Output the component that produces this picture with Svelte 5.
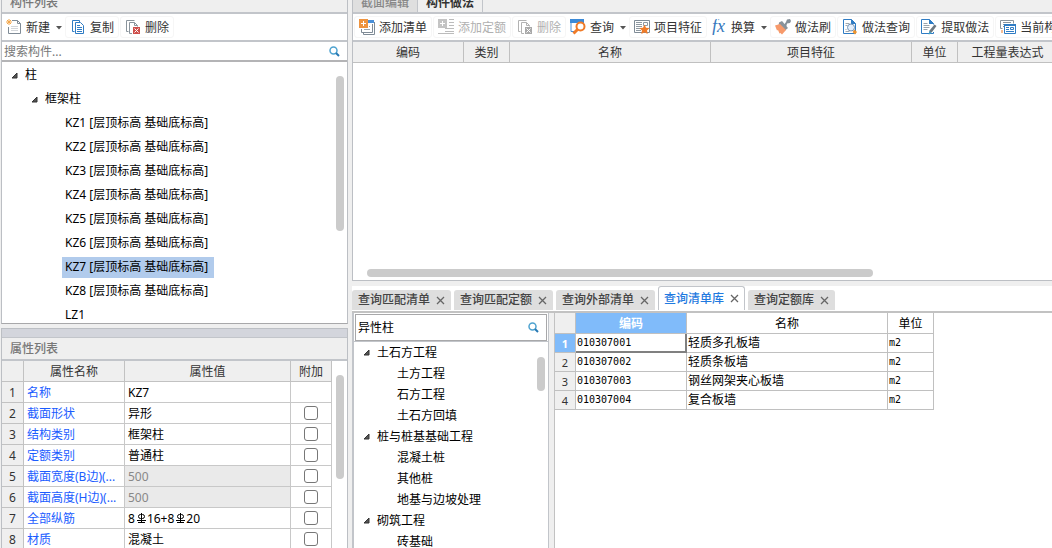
<script lang="ts">
  type Tool = { icon: string; label: string; menu?: boolean; disabled?: boolean };

  const listTools: Tool[] = [
    { icon: 'new', label: '新建', menu: true },
    { icon: 'copy', label: '复制' },
    { icon: 'delete', label: '删除' }
  ];

  const methodTools: Tool[] = [
    { icon: 'addList', label: '添加清单' },
    { icon: 'addQuota', label: '添加定额', disabled: true },
    { icon: 'deleteGray', label: '删除', disabled: true },
    { icon: 'query', label: '查询', menu: true },
    { icon: 'feature', label: '项目特征' },
    { icon: 'fx', label: '换算', menu: true },
    { icon: 'brush', label: '做法刷' },
    { icon: 'queryDoc', label: '做法查询' },
    { icon: 'extract', label: '提取做法' },
    { icon: 'current', label: '当前构件自动套做法' }
  ];

  const columns = ['KZ1', 'KZ2', 'KZ3', 'KZ4', 'KZ5', 'KZ6', 'KZ7', 'KZ8'];
  let selected = $state('KZ7');

  const props = [
    { name: '名称', value: 'KZ7', noCheck: true },
    { name: '截面形状', value: '异形' },
    { name: '结构类别', value: '框架柱' },
    { name: '定额类别', value: '普通柱' },
    { name: '截面宽度(B边)(...', value: '500', readonly: true },
    { name: '截面高度(H边)(...', value: '500', readonly: true },
    { name: '全部纵筋', value: '', rebar: [['8', '16+8'], ['', '20']] },
    { name: '材质', value: '混凝土' }
  ];

  const methodCols = ['编码', '类别', '名称', '项目特征', '单位', '工程量表达式'];

  const queryTabs = ['查询匹配清单', '查询匹配定额', '查询外部清单', '查询清单库', '查询定额库'];
  let activeTab = $state('查询清单库');

  let componentFilter = $state('');
  let listFilter = $state('异性柱');

  const chapters = [
    { name: '土石方工程', items: ['土方工程', '石方工程', '土石方回填'] },
    { name: '桩与桩基基础工程', items: ['混凝土桩', '其他桩', '地基与边坡处理'] },
    { name: '砌筑工程', items: ['砖基础'] }
  ];

  const results = [
    { code: '010307001', name: '轻质多孔板墙', unit: 'm2' },
    { code: '010307002', name: '轻质条板墙', unit: 'm2' },
    { code: '010307003', name: '钢丝网架夹心板墙', unit: 'm2' },
    { code: '010307004', name: '复合板墙', unit: 'm2' }
  ];
</script>

{#snippet icon(name: string)}
  <svg class="icon" viewBox="0 0 16 16" width="16" height="16" aria-hidden="true">
    {#if name === 'new'}
      <path d="M6 1.500h5.500l3 3v10h-12V8" fill="#fff" stroke="#7f8b96" />
      <path d="M11.500 1.500v3h3" fill="none" stroke="#7f8b96" />
      <path d="M5 7.500h7M5 9.500h7M5 11.500h7" stroke="#d3d6da" />
      <path d="M1 1l4 4M5 1L1 5M3 0v6M0 3h6" stroke="#f3a64a" />
    {:else if name === 'copy'}
      <path d="M4.500 12.500h-2v-11h7v2" fill="none" stroke="#2f7cc4" />
      <path d="M5.500 3.500h5l3 3v8h-8z" fill="#fff" stroke="#2f7cc4" />
      <path d="M7 6.500h3M7 8.500h5M7 10.500h5M7 12.500h5" stroke="#2f7cc4" />
    {:else if name === 'delete' || name === 'deleteGray'}
      {@const line = name === 'delete' ? '#8a949c' : '#b2b2b2'}
      {@const box = name === 'delete' ? '#cf4f4b' : '#a9a9a9'}
      <path d="M3.500 12.500h-2v-11h8" fill="none" stroke={line} />
      <path d="M7 14.500H4.500v-11h5l3 3v1" fill="none" stroke={line} />
      <path d="M9.500 3.500v3h3" fill="none" stroke={line} />
      <rect x="8" y="8" width="7" height="7" fill={box} />
      <path d="M9.500 9.500l4 4M13.500 9.500l-4 4" stroke="#fff" />
    {:else if name === 'addList'}
      <path d="M9 1h6v3H9z" fill="#4a90d9" />
      <path d="M15.500 3v12.500H4.500v-2M13.500 5v8.500h-11V10" fill="none" stroke="#7f8b96" />
      <path d="M5 10.500h6M10 7.500h1" stroke="#9da6ae" />
      <rect x="0" y="0" width="9" height="9" fill="#ee9440" />
      <path d="M4.500 2v5M2 4.500h5" stroke="#fff" />
    {:else if name === 'addQuota'}
      <rect x="0" y="0" width="9" height="9" fill="#c4c4c4" />
      <path d="M4.500 2v5M2 4.500h5" stroke="#fff" />
      <path d="M11 .5h5M11 3.500h5M11 6.500h5M7 9.500h9M7 12.500h9M0 14.500h16" stroke="#bcbcbc" />
    {:else if name === 'query'}
      <path d="M4 12.500H1V2" fill="none" stroke="#4a90d9" />
      <path d="M0 0h14v4H0z" fill="#3b8ad8" />
      <path d="M2 4h12v8H2z" fill="#fff" />
      <circle cx="10.500" cy="7.500" r="4" fill="#fff" stroke="#f07b28" stroke-width="2" />
      <path d="M7.500 10.500L3.500 14.500" stroke="#f07b28" stroke-width="3" />
    {:else if name === 'feature'}
      <path d="M.5 1.500h15v12H.5z" fill="#fff" stroke="#7f8b96" />
      <path d="M2 3.500h6M2 5.500h6M2 7.500h6M2 9.500h5M2 11.500h5" stroke="#8e99a2" />
      <path d="M9.500 3.500h4v3h-4z" fill="none" stroke="#8e99a2" />
      <path d="M10.500 5.500l1.500 3.200 3.500.4-2.500 2.500.7 3.400-3.200-1.700L7.300 15l.7-3.400L5.500 9.100l3.500-.4z" fill="#f07b28" />
    {:else if name === 'fx'}
      <text class="fx" x="1" y="13">fx</text>
    {:else if name === 'brush'}
      <path d="M4 3.500l3-1.500 6 7-3 2.500-6.500-4z" fill="#8a939b" />
      <path d="M9 6l2-3 1-2.500L15 0l1 2-1 2-3 .5-1 4z" fill="#858f98" />
      <path d="M0 6.500L5 5l6 6-4 4.500-1.500-1.500-1 .5L3 11l-1 .5z" fill="#f79a6b" />
    {:else if name === 'queryDoc'}
      <path d="M1.500.5h8l4 4v10h-12z" fill="#fff" stroke="#2f7cc4" />
      <path d="M9 0l5 5H9z" fill="#2f7cc4" />
      <path d="M3.500 4.500h4M3.500 6.500h2M3.500 10.500h1M3.500 12.500h4" stroke="#a0a8af" />
      <circle cx="9" cy="8.500" r="3.500" fill="#e4eefa" stroke="#7595b8" />
      <path d="M12.500 10.500l2.500 2.500-2 2.500-2.500-2.500z" fill="#f0952d" />
    {:else if name === 'extract'}
      <path d="M12.500 13v1.500H.5V.5h8l4 4v1" fill="#fff" stroke="#2f7cc4" />
      <path d="M8 0l5 5H8z" fill="#2f7cc4" />
      <path d="M2.500 4.500h4M2.500 6.500h6M2.500 8.500h6M2.500 10.500h4" stroke="#9aa3ab" />
      <path d="M13.500 5.500l2 1.500-4.500 6-3 2.500.5-4z" fill="#6d7880" />
      <path d="M8.500 12l2 2-3 1.500z" fill="#40a4c8" />
    {:else}
      <path d="M2.500 9.500h-2v-8h13v3" fill="none" stroke="#8a949c" />
      <path d="M3 3.500h8M3 5.500h1M3 7.500h1" stroke="#8a949c" />
      <path d="M2 11v3" stroke="#f07b28" />
      <path d="M4.500 5.500h11v9h-11z" fill="#fff" stroke="#2f7cc4" />
      <path d="M4 5h12v2H4z" fill="#2f7cc4" />
      <path d="M6 8.500h3M6 10.500h3M6 12.500h8M10.500 8.500h3v2h-3z" fill="none" stroke="#2f7cc4" />
    {/if}
  </svg>
{/snippet}

{#snippet toolbar(tools: Tool[])}
  <div class="toolbar">
    {#each tools as tool}
      <button class="tool" class:menu={tool.menu} disabled={tool.disabled}>
        {@render icon(tool.icon)}
        <span>{tool.label}</span>
        {#if tool.menu}
          <svg class="caret" viewBox="0 0 6 4" width="6" height="4" aria-hidden="true">
            <path d="M0 0h6L3 3.500z" fill="#555" />
          </svg>
        {/if}
      </button>
    {/each}
  </div>
{/snippet}

{#snippet magnifier()}
  <svg viewBox="0 0 11 11" width="11" height="11" aria-hidden="true">
    <circle cx="4.500" cy="4.500" r="3.500" fill="none" stroke="#4fa3d0" stroke-width="1.500" />
    <path d="M7 7l3 3" stroke="#2879b4" stroke-width="2" />
  </svg>
{/snippet}

{#snippet arrow()}
  <svg class="arrow" viewBox="0 0 7 7" width="7" height="7" aria-hidden="true">
    <path d="M6 1v5H1z" fill="#555" stroke="#333" />
  </svg>
{/snippet}

{#snippet rebarMark()}
  <svg class="rebar" viewBox="0 0 12 12" width="12" height="12" role="img" aria-label="三级钢">
    <path d="M6.500 1v9M2 8.500h9M3 10.500h7" stroke="#000" />
    <rect x="3.500" y="2.500" width="6" height="4" rx="2" fill="none" stroke="#000" />
  </svg>
{/snippet}

<main>
  <aside>
    <section class="panel components">
      <h2 class="cut-title">构件列表</h2>
      {@render toolbar(listTools)}
      <label class="search">
        <input type="text" placeholder="搜索构件..." aria-label="搜索构件" bind:value={componentFilter} />
        {@render magnifier()}
      </label>
      <div class="tree-area">
        <ul class="tree">
          <li>{@render arrow()}柱</li>
          <li class="level-2">{@render arrow()}框架柱</li>
          {#each columns as column}
            <li class="level-3">
              <button class:selected={selected === column} onclick={() => (selected = column)}>
                {column} [层顶标高 基础底标高]
              </button>
            </li>
          {/each}
          <li class="level-3"><button>LZ1</button></li>
        </ul>
        <div class="thumb tree-thumb"></div>
      </div>
    </section>

    <section class="panel properties">
      <div class="splitter"></div>
      <h2>属性列表</h2>
      <div class="prop-area">
        <table class="props">
          <thead>
            <tr>
              <th class="num"></th>
              <th class="name">属性名称</th>
              <th class="value">属性值</th>
              <th class="extra">附加</th>
            </tr>
          </thead>
          <tbody>
            {#each props as prop, i}
              <tr>
                <th>{i + 1}</th>
                <td class="link">{prop.name}</td>
                <td class:readonly={prop.readonly}>
                  {#if prop.rebar}
                    {#each prop.rebar as part}{part[0]}{@render rebarMark()}{part[1]}{/each}
                  {:else}
                    {prop.value}
                  {/if}
                </td>
                <td class="check">
                  {#if !prop.noCheck}
                    <input type="checkbox" aria-label={`附加 ${prop.name}`} />
                  {/if}
                </td>
              </tr>
            {/each}
          </tbody>
        </table>
        <div class="thumb prop-thumb"></div>
      </div>
    </section>
  </aside>

  <div class="work">
    <section class="panel methods">
      <div class="cut-tabs">
        <button>截面编辑</button>
        <button class="active">构件做法</button>
      </div>
      {@render toolbar(methodTools)}
      <div class="method-area">
        <table class="method-table">
          <colgroup>
            <col class="w-code" /><col class="w-unit" /><col class="w-name" />
            <col class="w-name" /><col class="w-unit" /><col class="w-expr" />
          </colgroup>
          <thead>
            <tr>
              {#each methodCols as col}<th>{col}</th>{/each}
            </tr>
          </thead>
        </table>
        <div class="h-thumb"></div>
      </div>
    </section>

    <section class="query">
      <div class="tabs">
        {#each queryTabs as tab}
          <div class="tab" class:active={activeTab === tab}>
            <button onclick={() => (activeTab = tab)}>{tab}</button>
            <button class="close" aria-label={`关闭${tab}`}>
              <svg viewBox="0 0 9 9" width="9" height="9" aria-hidden="true">
                <path d="M1 1l7 7M8 1L1 8" stroke="#666" stroke-width="1.300" />
              </svg>
            </button>
          </div>
        {/each}
      </div>

      <div class="query-body">
        <div class="chapters">
          <label class="search boxed">
            <input type="text" aria-label="查询清单" bind:value={listFilter} />
            {@render magnifier()}
          </label>
          <div class="tree-area">
            <ul class="tree compact">
              {#each chapters as chapter}
                <li>{@render arrow()}{chapter.name}</li>
                {#each chapter.items as item}
                  <li class="level-2">{item}</li>
                {/each}
              {/each}
            </ul>
            <div class="thumb chapter-thumb"></div>
          </div>
        </div>

        <div class="results">
          <table>
            <colgroup>
              <col class="w-num" /><col class="w-code" /><col class="w-name" /><col class="w-unit" />
            </colgroup>
            <thead>
              <tr>
                <th class="num"></th>
                <th class="current">编码</th>
                <th>名称</th>
                <th>单位</th>
              </tr>
            </thead>
            <tbody>
              {#each results as row, i}
                <tr>
                  <th class="num" class:current={i === 0}>{i + 1}</th>
                  <td class="mono" class:focus={i === 0}>{row.code}</td>
                  <td>{row.name}</td>
                  <td class="mono">{row.unit}</td>
                </tr>
              {/each}
            </tbody>
          </table>
        </div>
      </div>
    </section>
  </div>
</main>

<style>
  :global(body) {
    margin: 0;
    background: #efefef;
  }

  main {
    display: flex;
    gap: 4px;
    height: 100vh;
    overflow: hidden;
    font: 12px/18px 'Noto Sans', 'Noto Sans CJK SC', sans-serif;
    color: #000;
  }

  main :global(*) {
    box-sizing: border-box;
  }

  button,
  input {
    font: inherit;
    color: inherit;
    margin: 0;
    padding: 0;
    border: 0;
    background: none;
  }

  svg {
    flex: none;
  }

  aside {
    flex: 0 0 347px;
    display: flex;
    flex-direction: column;
    gap: 4px;
    margin-left: 1px;
  }

  .work {
    flex: 1;
    min-width: 0;
    display: flex;
    flex-direction: column;
    gap: 5px;
  }

  .panel {
    display: flex;
    flex-direction: column;
    border: 1px solid #bcbfc4;
    overflow: hidden;
  }

  .components,
  .methods {
    flex: 1;
    min-height: 0;
    border-top: 0;
  }

  .components {
    border-bottom-color: #a8a8aa;
  }

  .methods {
    border-right: 0;
  }

  h2 {
    flex: none;
    margin: 0;
    padding-left: 8px;
    font-size: 12px;
    line-height: 21px;
    font-weight: 500;
    color: #777;
    border-bottom: 2px solid #c2c5ca;
  }

  /* the title bar is scrolled half out of view */
  .cut-title,
  .cut-tabs {
    flex: none;
    display: flex;
    align-items: flex-end;
    height: 14px;
    line-height: 18px;
    border-bottom: 2px solid #c2c5ca;
    overflow: hidden;
  }

  .cut-tabs button {
    padding: 0 8px;
    border-right: 1px solid #c2c5ca;
    background: #dfdfdf;
    color: #888;
    font-weight: 500;
  }

  .cut-tabs .active {
    background: #efefef;
    color: #333;
    font-weight: 700;
  }

  .toolbar {
    flex: none;
    display: flex;
    gap: 1px;
    height: 28px;
    padding: 2px 1px;
    background: #fff;
    border-bottom: 2px solid #c2c5ca;
    overflow: hidden;
  }

  .tool {
    flex: none;
    display: flex;
    align-items: center;
    gap: 4px;
    padding: 0 4px;
    border: 1px solid #f6f6f6;
    border-radius: 3px;
    color: #333;
    white-space: nowrap;
  }

  .tool span {
    padding-top: 2px;
  }

  .tool.menu {
    padding: 0 1px 0 2px;
    border-color: transparent;
  }

  .tool:disabled {
    color: #b0b0b0;
  }

  .caret {
    margin: 1px 0 0 2px;
  }

  .fx {
    font: italic 18px 'Liberation Serif', serif;
    fill: #3678bd;
  }

  .search {
    flex: none;
    display: flex;
    align-items: center;
    height: 20px;
    padding: 0 7px 0 2px;
    background: #fff;
    border-bottom: 2px solid #b4b4b6;
  }

  .search input {
    flex: 1;
    width: 0;
    min-width: 0;
    padding-top: 1px;
    outline: 0;
  }

  .search input::placeholder {
    color: #777;
    opacity: 1;
  }

  .search.boxed {
    height: 27px;
    margin: 1px 1px 0;
    border: 1px solid #a8a8aa;
  }

  .tree-area {
    position: relative;
    flex: 1;
    min-height: 0;
    background: #fff;
    overflow: hidden;
  }

  .tree {
    list-style: none;
    margin: 0;
    padding: 1px 0 0 9px;
  }

  .tree li {
    display: flex;
    align-items: center;
    gap: 7px;
    height: 24px;
    white-space: nowrap;
  }

  .tree .level-2 {
    padding-left: 20px;
  }

  .tree .level-3 {
    padding-left: 51px;
  }

  .tree button {
    height: 21px;
    padding: 0 6px 0 3px;
  }

  .tree .selected {
    background: #b1cbec;
  }

  .tree.compact {
    padding-top: 0;
  }

  .tree.compact li {
    height: 21px;
  }

  .tree.compact .level-2 {
    padding-left: 34px;
  }

  .thumb,
  .h-thumb {
    position: absolute;
    border-radius: 4px;
    background: #cbcbcb;
  }

  .thumb {
    right: 3px;
    width: 8px;
  }

  .tree-thumb {
    top: 14px;
    height: 155px;
  }

  .prop-thumb {
    top: 14px;
    height: 104px;
  }

  .chapter-thumb {
    top: 15px;
    height: 34px;
  }

  .h-thumb {
    left: 14px;
    bottom: 3px;
    width: 506px;
    height: 8px;
  }

  .properties {
    flex: 0 0 220px;
    border-bottom: 0;
  }

  .splitter {
    flex: none;
    height: 9px;
    background: #d3d5dc;
    border-bottom: 1px solid #c2c5ca;
  }

  .prop-area {
    position: relative;
    flex: 1;
    background: #fff;
  }

  table {
    table-layout: fixed;
    border-collapse: separate;
    border-spacing: 0;
  }

  th,
  td {
    padding: 2px 0 0;
    font-weight: 400;
    white-space: nowrap;
    overflow: hidden;
    border: solid #c8c8c8;
    border-width: 0 1px 1px 0;
  }

  .props {
    width: 330px;
  }

  .props th,
  .props td {
    height: 21px;
    line-height: 18px;
  }

  .props th {
    background: #efefef;
    color: #333;
    border-color: #c2c2c2;
  }

  .props td {
    padding-left: 3px;
  }

  .props .num {
    width: 22px;
  }

  .props .name {
    width: 101px;
  }

  .props .value {
    width: 166px;
  }

  .props .extra {
    width: 41px;
  }

  .props .link {
    color: #1a5cff;
  }

  .props .readonly {
    background: #eaeaea;
    color: #888;
  }

  .props .check {
    padding: 0;
    text-align: center;
  }

  .check input {
    appearance: none;
    display: block;
    width: 14px;
    height: 14px;
    margin: 0 auto;
    border: 1px solid #777;
    border-radius: 3px;
    background: #fff;
  }

  .check input:checked {
    background: #4a90d9;
  }

  .rebar {
    vertical-align: -1px;
  }

  .method-area {
    position: relative;
    flex: 1;
    background: #fff;
    overflow: hidden;
  }

  .method-table {
    width: 705px;
  }

  .method-table th {
    height: 21px;
    background: #efefef;
    color: #333;
    border-color: #c0c0c0;
  }

  .w-num {
    width: 21px;
  }

  .w-code {
    width: 111px;
  }

  .w-unit {
    width: 46px;
  }

  .w-name {
    width: 201px;
  }

  .w-expr {
    width: 100px;
  }

  .query {
    flex: 0 0 262px;
    min-height: 0;
    display: flex;
    flex-direction: column;
  }

  .tabs {
    flex: none;
    display: flex;
    align-items: flex-end;
    gap: 3px;
    height: 27px;
    padding-bottom: 1px;
    background: #fff;
    border-bottom: 2px solid #c2c2c2;
  }

  .tab {
    display: flex;
    align-items: center;
    gap: 6px;
    height: 20px;
    padding: 0 6px;
    border-radius: 3px 3px 0 0;
    background: #dedede;
    color: #444;
    font-weight: 500;
  }

  .tab button {
    white-space: nowrap;
  }

  .tab.active {
    height: 24px;
    padding: 0 5px;
    border: 1px solid #c2c5ca;
    border-bottom: 0;
    background: #fff;
    color: #1f7ae0;
  }

  .close {
    display: flex;
  }

  .query-body {
    flex: 1;
    min-height: 0;
    display: flex;
    gap: 5px;
  }

  .chapters {
    flex: 0 0 197px;
    min-width: 0;
    display: flex;
    flex-direction: column;
    border: solid #c2c5ca;
    border-width: 0 1px 0 2px;
    background: #fff;
  }

  .chapters .tree-area {
    border-top: 1px solid #c2c5ca;
  }

  .results {
    flex: 1;
    min-width: 0;
    background: #fff;
    border-left: 1px solid #c2c2c2;
    overflow: hidden;
  }

  .results table {
    width: 379px;
  }

  .results th,
  .results td {
    height: 19px;
    line-height: 16px;
    border-color: #c0c0c0;
  }

  .results thead th {
    height: 21px;
  }

  .results td {
    padding: 0 0 0 1px;
  }

  .results .num {
    background: #efefef;
    color: #333;
    font-size: 11px;
  }

  .results .current {
    background: #80bbfa;
    color: #fff;
    font-weight: 700;
  }

  .results .mono {
    font-family: 'DejaVu Sans Mono', monospace;
    font-size: 10px;
  }

  .results .focus {
    border-right: 2px solid #808080;
    border-bottom: 2px solid #808080;
  }
</style>
